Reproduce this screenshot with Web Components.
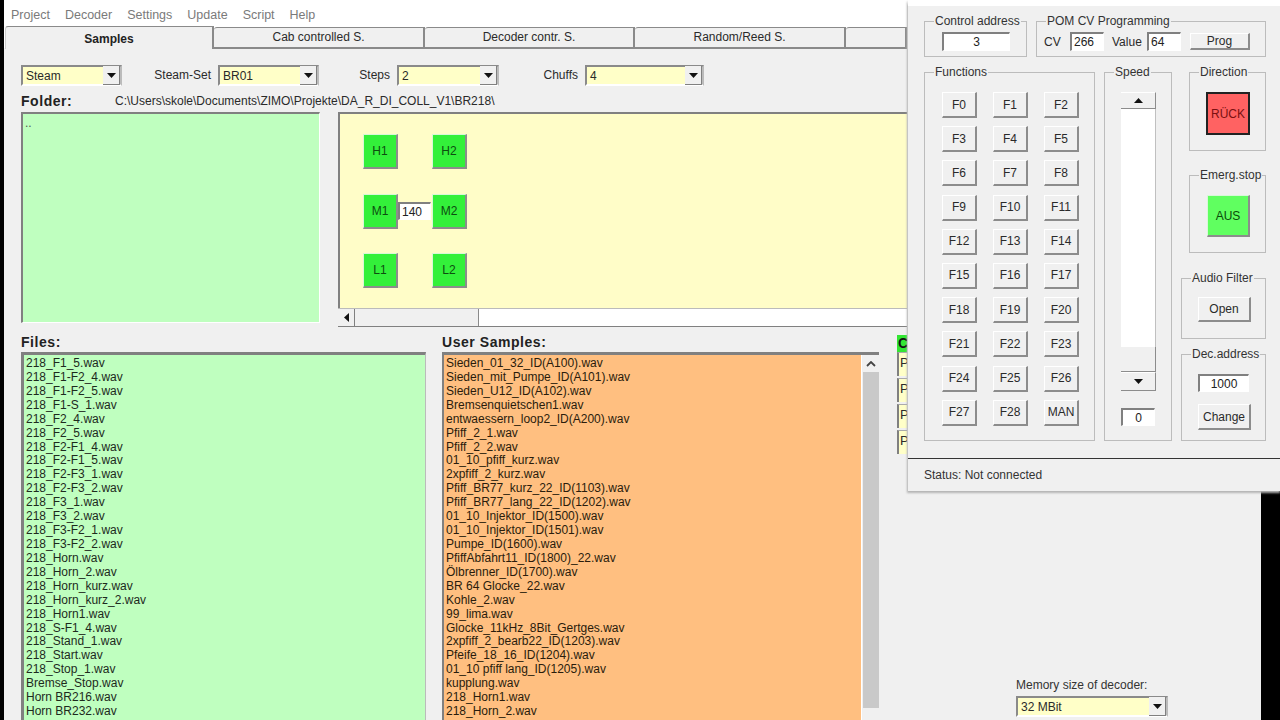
<!DOCTYPE html>
<html><head><meta charset="utf-8">
<style>
html,body{margin:0;padding:0;background:#f0f0f0}
body{font:12px/14px "Liberation Sans",Arial,sans-serif;color:#2a2a2a}
.row{display:flex}
.col{display:flex;flex-direction:column}
.grow{flex:1}
.lbl{text-align:right;padding-right:7px;line-height:21px;box-sizing:border-box}
.h{font-weight:bold;font-size:14px;letter-spacing:.55px;line-height:16px;color:#222}
.fn{display:grid;grid-template-columns:repeat(3,35px);column-gap:16px;grid-auto-rows:26px;row-gap:8.2px}
.samples{display:grid;grid-template-columns:35px 34px 35px;grid-auto-rows:35px;row-gap:24.5px;padding:20px 0 0 23px}
.pcell{height:24px;margin-bottom:2px;border-left:2px solid #808080;border-top:1px solid #aaa;background:#ffffc8;box-sizing:border-box;padding:3px 0 0 1px;font-size:13px}
.ccell{height:17px;background:#33e633;font-weight:bold;font-size:14px;line-height:17px;color:#111;padding-left:1px}
</style></head><body>

<template id="t-app"><style>
:host{display:flex;width:1280px;height:720px;overflow:hidden;position:relative;background:#f0f0f0}
.l{width:4px;background:#000;flex:none}.r{width:19px;background:#000;flex:none}
.m{flex:1;min-width:0;display:flex;flex-direction:column;overflow:hidden}
</style><div class="l"></div><div class="m"><slot></slot></div><div class="r"></div><slot name="overlay"></slot></template>

<template id="t-menu"><style>
:host{display:flex;flex:none;height:26px;background:#fff;padding-left:7px;gap:15px;align-items:center;color:#7a7a7a;font-size:12.5px;padding-top:4px;box-sizing:border-box}
</style><slot></slot></template>

<template id="t-tabs"><style>
:host{display:flex;flex:none;height:23px;background:linear-gradient(#fff 0 22px,#f0f0f0 22px);padding-left:1px;box-sizing:border-box;width:903px}
</style><slot></slot></template>

<template id="t-tab"><style>
:host{display:flex;flex:none;align-items:center;justify-content:center;box-sizing:border-box;height:22px;margin-top:1px;background:#f0f0f0;border-top:1px solid #8a8a8a;border-right:2px solid #8a8a8a;border-bottom:2px solid #8a8a8a;border-top-left-radius:3px;color:#2a2a2a;padding-bottom:1px}
:host([active]){height:23px;margin-top:0;border-bottom:0;font-weight:bold;color:#222;border-left:1px solid #ccc;padding-top:2px}
</style><slot></slot></template>

<template id="t-combo"><style>
:host{display:flex;flex:none;box-sizing:border-box;height:21px;border:2px solid #8a8a8a;border-right-color:#bbb;border-bottom-color:#fff;border-left-width:2px;background:#ffffc8;align-items:center;padding-left:3px;position:relative}
.t{flex:1}
.b{flex:none;width:17px;height:19px;margin-right:0;background:#f0f0f0;border-right:1px solid #808080;border-bottom:1px solid #808080;box-sizing:border-box;display:flex;align-items:center;justify-content:center}
</style><span class="t"><slot></slot></span><span class="b"><svg width="9" height="5" viewBox="0 0 9 5"><polygon points="0,0 9,0 4.5,5" fill="#111"/></svg></span></template>

<template id="t-btn"><style>
:host{display:inline-flex;flex:none;align-items:center;justify-content:center;box-sizing:border-box;background:#f0f0f0;border:1px solid #fff;border-right:2px solid #8c8c8c;border-bottom:2px solid #8c8c8c;color:#2a2a2a}
:host([tone=green]){background:#33f03a;border-top-color:#d8f8d8;border-left-color:#d8f8d8;color:#0d4d10}
:host([tone=light]){background:#60ff60;border-top-color:#d8f8d8;border-left-color:#d8f8d8;color:#0a4a0a}
:host([tone=red]){background:#ff6262;border:2px solid #222;color:#7a1010}
</style><slot></slot></template>

<template id="t-field"><style>
:host{display:flex;flex:none;box-sizing:border-box;align-items:center;background:#fff;border:1px solid #fff;border-top:2px solid #808080;border-left:2px solid #808080;padding-left:2px;color:#222}
:host([center]){justify-content:center;padding-left:0}
</style><slot></slot></template>

<template id="t-group"><style>
:host{display:block;box-sizing:border-box;border:1px solid #bcbcbc;flex:none}
.lg{width:fit-content;margin:-8px 0 0 9px;padding:0 1px;background:#f0f0f0;line-height:15px;color:#333;font-size:12px}
.bd{padding:var(--pad,0)}
</style><div class="lg"><slot name="legend"></slot></div><div class="bd"><slot></slot></div></template>

<template id="t-list"><style>
:host{display:flex;flex:none;box-sizing:border-box;border:3px solid #808080;border-right:1px solid #bbb;border-bottom:0;background:var(--bg,#bfffbf);line-height:13.92px;color:#1d2a1d;overflow:hidden}
.c{flex:1;padding:2px 0 0 2px;min-width:0;background:var(--bg,#bfffbf);white-space:nowrap;outline:0}
.sb{flex:none;width:18px;background:#f0f0f0;display:none;border-left:1px solid #fff;box-sizing:border-box;flex-direction:column;padding-left:1px}
:host([scroll]) .sb{display:flex}
:host([scroll]){border-left-width:2px;border-right:0}
.a{height:17px;flex:none;display:flex;align-items:center;justify-content:center}
.tr{height:336px;flex:none;background:#c9c9c9;width:16px}
</style><div class="c"><slot></slot></div><div class="sb"><div class="a"><svg width="10" height="6" viewBox="0 0 10 6"><polyline points="1,5 5,1 9,5" fill="none" stroke="#444" stroke-width="1.8"/></svg></div><div class="tr"></div></div></template>

<template id="t-hbar"><style>
:host{display:flex;flex:none;height:19px;box-sizing:border-box;border-top:1px solid #bbb;border-bottom:1px solid #808080;background:#fff}
.a{width:17px;background:#f0f0f0;display:flex;align-items:center;justify-content:center;border-right:1px solid #808080;box-sizing:border-box}
.t{width:124px;background:#f0f0f0;border-right:1px solid #8a8a8a;box-sizing:border-box}
</style><div class="a"><svg width="5" height="9" viewBox="0 0 5 9"><polygon points="5,0 5,9 0,4.5" fill="#111"/></svg></div><div class="t"></div></template>

<template id="t-vbar"><style>
:host{display:flex;flex-direction:column;flex:none;width:35px}
.a{flex:none;background:#f0f0f0;border-top:1px solid #fff;border-right:1px solid #8c8c8c;border-bottom:1px solid #8c8c8c;box-sizing:border-box;display:flex;align-items:center;justify-content:center}
.tr{height:238px;flex:none;background:#fff;border-right:1px solid #c0c0c0;box-sizing:border-box}
.th{height:25px;flex:none;background:#f0f0f0;border-right:1px solid #8c8c8c;border-bottom:1px solid #8c8c8c;box-sizing:border-box}
</style><div class="a" style="height:17px"><svg width="9" height="5" viewBox="0 0 9 5"><polygon points="0,5 9,5 4.5,0" fill="#111"/></svg></div><div class="tr"></div><div class="th"></div><div class="a" style="height:19px"><svg width="9" height="5" viewBox="0 0 9 5"><polygon points="0,0 9,0 4.5,5" fill="#111"/></svg></div></template>

<template id="t-win"><style>
:host{position:absolute;left:907px;top:0;width:373px;height:491px;box-sizing:border-box;border-top:6px solid #fff;border-left:1px solid #c4c4c4;background:#f0f0f0;display:flex;flex-direction:column;box-shadow:0 2px 2px #b4b4b4}
.in{flex:none;height:453px;padding:15px 0 0 16px;box-sizing:border-box;border-bottom:1px solid #333}
.st{flex:1;display:flex;align-items:center;padding-left:16px;color:#333;padding-bottom:1px}
</style><div class="in"><slot></slot></div><div class="st"><slot name="status"></slot></div></template>

<desk-app>
  <menu-bar><span>Project</span><span>Decoder</span><span>Settings</span><span>Update</span><span>Script</span><span>Help</span></menu-bar>
  <tab-strip>
    <tab-item active style="width:209px">Samples</tab-item>
    <tab-item style="width:211px">Cab controlled S.</tab-item>
    <tab-item style="width:210px">Decoder contr. S.</tab-item>
    <tab-item style="width:211px">Random/Reed S.</tab-item>
    <tab-item style="width:61px"></tab-item>
  </tab-strip>
  <div class="col" style="padding:16px 0 0 17px">
    <div class="row" style="height:21px">
      <combo-box style="width:101px">Steam</combo-box>
      <span class="lbl" style="width:96px">Steam-Set</span>
      <combo-box style="width:101px">BR01</combo-box>
      <span class="lbl" style="width:78px">Steps</span>
      <combo-box style="width:102px">2</combo-box>
      <span class="lbl" style="width:86px">Chuffs</span>
      <combo-box style="width:119px">4</combo-box>
    </div>
    <div class="row" style="height:16px;margin-top:7px;margin-bottom:3px;align-items:center">
      <span class="h" style="width:94px">Folder:</span><span>C:\Users\skole\Documents\ZIMO\Projekte\DA_R_DI_COLL_V1\BR218\</span>
    </div>
    <div class="row" style="height:215px">
      <div style="width:299px;height:211px;flex:none;box-sizing:border-box;border:2px solid #808080;border-right:1px solid #fff;border-bottom:1px solid #fff;background:#bfffbf;padding:2px 0 0 2px;color:#555;line-height:14px">..</div>
      <div class="col" style="width:569px;margin-left:18px;flex:none">
        <div style="height:196px;box-sizing:border-box;border-top:2px solid #808080;border-left:2px solid #808080;background:#fffdc8">
          <div class="samples">
            <win-btn tone="green">H1</win-btn><span></span><win-btn tone="green">H2</win-btn>
            <win-btn tone="green">M1</win-btn><num-field style="height:18px;align-self:center;width:33px">140</num-field><win-btn tone="green">M2</win-btn>
            <win-btn tone="green">L1</win-btn><span></span><win-btn tone="green">L2</win-btn>
          </div>
        </div>
        <h-bar></h-bar>
      </div>
    </div>
    <div class="row" style="margin-top:7px;height:386px">
      <div class="col" style="width:405px;flex:none">
        <span class="h" style="margin-bottom:2px">Files:</span>
        <list-box style="height:370px">
          <div>218_F1_5.wav</div><div>218_F1-F2_4.wav</div><div>218_F1-F2_5.wav</div><div>218_F1-S_1.wav</div><div>218_F2_4.wav</div><div>218_F2_5.wav</div><div>218_F2-F1_4.wav</div><div>218_F2-F1_5.wav</div><div>218_F2-F3_1.wav</div><div>218_F2-F3_2.wav</div><div>218_F3_1.wav</div><div>218_F3_2.wav</div><div>218_F3-F2_1.wav</div><div>218_F3-F2_2.wav</div><div>218_Horn.wav</div><div>218_Horn_2.wav</div><div>218_Horn_kurz.wav</div><div>218_Horn_kurz_2.wav</div><div>218_Horn1.wav</div><div>218_S-F1_4.wav</div><div>218_Stand_1.wav</div><div>218_Start.wav</div><div>218_Stop_1.wav</div><div>Bremse_Stop.wav</div><div>Horn BR216.wav</div><div>Horn BR232.wav</div><div>luftablass.wav</div>
        </list-box>
      </div>
      <div class="col" style="width:437px;flex:none;margin-left:16px">
        <span class="h" style="margin-bottom:2px">User Samples:</span>
        <list-box scroll style="height:370px;--bg:#ffbf80;color:#2a1c0c">
          <div>Sieden_01_32_ID(A100).wav</div><div>Sieden_mit_Pumpe_ID(A101).wav</div><div>Sieden_U12_ID(A102).wav</div><div>Bremsenquietschen1.wav</div><div>entwaessern_loop2_ID(A200).wav</div><div>Pfiff_2_1.wav</div><div>Pfiff_2_2.wav</div><div>01_10_pfiff_kurz.wav</div><div>2xpfiff_2_kurz.wav</div><div>Pfiff_BR77_kurz_22_ID(1103).wav</div><div>Pfiff_BR77_lang_22_ID(1202).wav</div><div>01_10_Injektor_ID(1500).wav</div><div>01_10_Injektor_ID(1501).wav</div><div>Pumpe_ID(1600).wav</div><div>PfiffAbfahrt11_ID(1800)_22.wav</div><div>Ölbrenner_ID(1700).wav</div><div>BR 64 Glocke_22.wav</div><div>Kohle_2.wav</div><div>99_lima.wav</div><div>Glocke_11kHz_8Bit_Gertges.wav</div><div>2xpfiff_2_bearb22_ID(1203).wav</div><div>Pfeife_18_16_ID(1204).wav</div><div>01_10 pfiff lang_ID(1205).wav</div><div>kupplung.wav</div><div>218_Horn1.wav</div><div>218_Horn_2.wav</div><div>Bremse_Stop.wav</div>
        </list-box>
      </div>
      <div class="col" style="width:40px;flex:none;margin-left:18px;padding-top:1px">
        <div class="ccell">C</div>
        <div class="pcell">P</div><div class="pcell">P</div><div class="pcell">P</div><div class="pcell">P</div>
      </div>
      <div class="col" style="flex:none;margin-left:79px;align-self:flex-end;padding-bottom:3px;width:152px">
        <span style="margin-bottom:4px;color:#333">Memory size of decoder:</span>
        <combo-box style="width:152px">32 MBit</combo-box>
      </div>
    </div>
  </div>

  <throttle-window slot="overlay">
    <div class="row">
      <group-box style="width:103px;height:36px;--pad:3px 0 0 17px"><span slot="legend">Control address</span>
        <num-field center style="width:68px;height:19px">3</num-field></group-box>
      <group-box style="width:230px;height:36px;margin-left:9px;--pad:3px 0 0 7px"><span slot="legend">POM CV Programming</span>
        <div class="row" style="align-items:center">
          <span style="width:26px">CV</span><num-field style="width:34px;height:19px">266</num-field>
          <span style="margin-left:8px;width:35px">Value</span><num-field style="width:34px;height:19px">64</num-field>
          <win-btn style="width:60px;height:17px;margin-left:9px">Prog</win-btn>
        </div></group-box>
    </div>
    <div class="row" style="margin-top:15px">
      <group-box style="width:171px;height:369px;--pad:12px 0 0 17px"><span slot="legend">Functions</span>
        <div class="fn">
          <win-btn>F0</win-btn><win-btn>F1</win-btn><win-btn>F2</win-btn>
          <win-btn>F3</win-btn><win-btn>F4</win-btn><win-btn>F5</win-btn>
          <win-btn>F6</win-btn><win-btn>F7</win-btn><win-btn>F8</win-btn>
          <win-btn>F9</win-btn><win-btn>F10</win-btn><win-btn>F11</win-btn>
          <win-btn>F12</win-btn><win-btn>F13</win-btn><win-btn>F14</win-btn>
          <win-btn>F15</win-btn><win-btn>F16</win-btn><win-btn>F17</win-btn>
          <win-btn>F18</win-btn><win-btn>F19</win-btn><win-btn>F20</win-btn>
          <win-btn>F21</win-btn><win-btn>F22</win-btn><win-btn>F23</win-btn>
          <win-btn>F24</win-btn><win-btn>F25</win-btn><win-btn>F26</win-btn>
          <win-btn>F27</win-btn><win-btn>F28</win-btn><win-btn>MAN</win-btn>
        </div></group-box>
      <group-box style="width:68px;height:369px;margin-left:9px;--pad:12px 0 0 16px"><span slot="legend">Speed</span>
        <v-bar></v-bar>
        <num-field center style="width:34px;height:18px;margin-top:17px">0</num-field></group-box>
      <div class="col" style="width:85px;margin-left:9px;flex:none">
        <group-box style="width:77px;height:79px;margin-left:8px;--pad:12px 0 0 16px"><span slot="legend">Direction</span>
          <win-btn tone="red" style="width:44px;height:43px">RÜCK</win-btn></group-box>
        <group-box style="width:77px;height:78px;margin:24px 0 0 8px;--pad:12px 0 0 17px"><span slot="legend">Emerg.stop</span>
          <win-btn tone="light" style="width:43px;height:42px">AUS</win-btn></group-box>
        <group-box style="width:85px;height:61px;margin-top:25px;--pad:11px 0 0 16px"><span slot="legend">Audio Filter</span>
          <win-btn style="width:53px;height:25px">Open</win-btn></group-box>
        <group-box style="width:85px;height:87px;margin-top:15px;--pad:12px 0 0 16px"><span slot="legend">Dec.address</span>
          <num-field center style="width:51px;height:18px">1000</num-field>
          <win-btn style="width:53px;height:26px;margin-top:12px">Change</win-btn></group-box>
      </div>
    </div>
    <span slot="status">Status: Not connected</span>
  </throttle-window>
</desk-app>

<script>
const reg=(n,t)=>customElements.define(n,class extends HTMLElement{
  constructor(){super();this.attachShadow({mode:'open'}).appendChild(document.getElementById(t).content.cloneNode(true));}
});
[['desk-app','t-app'],['menu-bar','t-menu'],['tab-strip','t-tabs'],['tab-item','t-tab'],['combo-box','t-combo'],['win-btn','t-btn'],['num-field','t-field'],['group-box','t-group'],['list-box','t-list'],['h-bar','t-hbar'],['v-bar','t-vbar'],['throttle-window','t-win']].forEach(p=>reg(p[0],p[1]));
</script>
</body></html>
